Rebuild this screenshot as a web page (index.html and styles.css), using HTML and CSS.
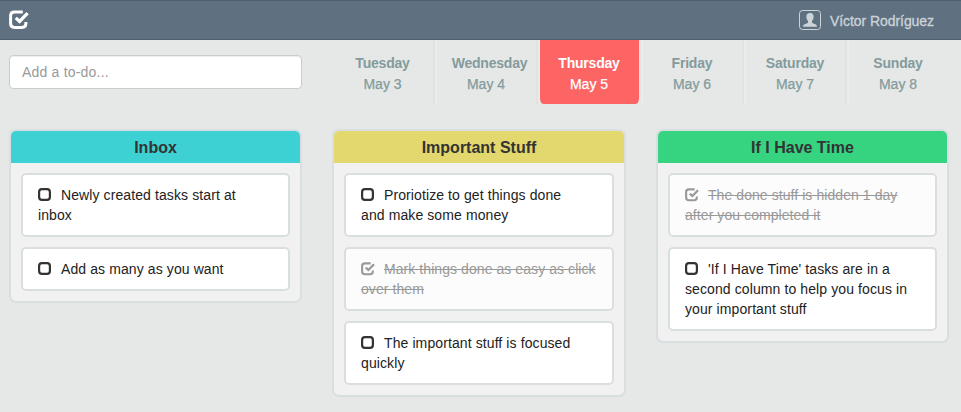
FILE: index.html
```
<!DOCTYPE html>
<html lang="en">
<head>
<meta charset="utf-8">
<title>To-do</title>
<link rel="stylesheet" href="styles.css">
</head>
<body>
<svg class="defs" aria-hidden="true">
  <symbol id="box" viewBox="0 0 13 13"><rect x="1.1" y="1.1" width="10.8" height="10.8" rx="2.8" fill="none" stroke="currentColor" stroke-width="2.2"/></symbol>
  <symbol id="check" viewBox="0 0 20 20"><path d="M13.8 2H5.5Q1.6 2 1.6 5.8V13.6Q1.6 17.5 5.5 17.5H13Q16.9 17.5 16.9 13.6V12" fill="none" stroke="currentColor" stroke-width="3"/><path d="M6.8 7.9L10.6 11.4L18.6 3.2" fill="none" stroke="currentColor" stroke-width="3.3"/></symbol>
</svg>
<header class="topbar">
  <svg class="logo"><use href="#check"/></svg>
  <div class="user">
    <svg class="avatar" viewBox="0 0 22 20"><rect x=".5" y=".5" width="21" height="19" rx="3" fill="none" stroke="currentColor"/><path d="M11 3C8.6 3 7.2 4.5 7.4 7C7.5 9 8.2 10.2 9 11V12.7C8 13.8 4 13.7 4 16.8H18C18 13.7 14 13.8 13 12.7V11C13.8 10.2 14.5 9 14.6 7C14.8 4.5 13.4 3 11 3Z" fill="currentColor"/></svg>
    <span>Víctor Rodríguez</span>
  </div>
</header>
<div class="tools">
  <input class="add" type="text" placeholder="Add a to-do...">
  <nav class="days">
    <div class="day"><b>Tuesday</b><span>May 3</span></div>
    <div class="day wide"><b>Wednesday</b><span>May 4</span></div>
    <div class="day today"><b>Thursday</b><span>May 5</span></div>
    <div class="day"><b>Friday</b><span>May 6</span></div>
    <div class="day"><b>Saturday</b><span>May 7</span></div>
    <div class="day"><b>Sunday</b><span>May 8</span></div>
  </nav>
</div>
<main class="board">
  <section class="list inbox">
    <h2>Inbox</h2>
    <div class="tasks">
      <div class="task"><svg><use href="#box"/></svg><span>Newly created tasks start at<br>inbox</span></div>
      <div class="task"><svg><use href="#box"/></svg><span>Add as many as you want</span></div>
    </div>
  </section>
  <section class="list important">
    <h2>Important Stuff</h2>
    <div class="tasks">
      <div class="task"><svg><use href="#box"/></svg><span>Proriotize to get things done<br>and make some money</span></div>
      <div class="task done"><svg><use href="#check"/></svg><span>Mark things done as easy as click<br>over them</span></div>
      <div class="task"><svg><use href="#box"/></svg><span>The important stuff is focused<br>quickly</span></div>
    </div>
  </section>
  <section class="list later">
    <h2>If I Have Time</h2>
    <div class="tasks">
      <div class="task done"><svg><use href="#check"/></svg><span>The done stuff is hidden 1 day<br>after you completed it</span></div>
      <div class="task"><svg><use href="#box"/></svg><span>'If I Have Time' tasks are in a<br>second column to help you focus in<br>your important stuff</span></div>
    </div>
  </section>
</main>
</body>
</html>
```

FILE: styles.css
```
* { box-sizing: border-box; }
body {
  margin: 0;
  height: 412px;
  overflow: hidden;
  background: #e6e8e7;
  font: 14px/20px "Liberation Sans", Arial, sans-serif;
  color: #222;
}
.defs { display: none; }
.topbar {
  height: 40px;
  display: flex;
  align-items: center;
  justify-content: space-between;
  padding: 0 27px 0 9px;
  background: #5f7081;
  border: solid #4a5f73;
  border-width: 1px 0;
}
.logo { width: 20px; height: 20px; color: #fff; }
.user {
  display: flex;
  align-items: center;
  gap: 9px;
  color: #ccd4d8;
  letter-spacing: -.06px;
  -webkit-text-stroke: .3px;
}
.user span { padding-top: 2px; }
.avatar { width: 22px; height: 20px; }
.tools { display: flex; height: 89px; align-items: flex-start; }
.add {
  width: 293px;
  height: 34px;
  margin: 15px 29px 0 9px;
  padding: 6px 12px;
  border: 1px solid #ccc;
  border-radius: 4px;
  background: #fff;
  box-shadow: inset 0 1px 1px rgba(0, 0, 0, .075);
  font: inherit;
  letter-spacing: .2px;
}
.add::placeholder { color: #999; opacity: 1; }
.days { display: flex; }
.day {
  width: 103px;
  height: 64px;
  padding: 13px 1px 0 0;
  display: flex;
  flex-direction: column;
  align-items: center;
  line-height: 21px;
  color: #839b9c;
  border-left: 2px solid #eaeceb;
  border-right: 2px solid #e1e3e2;
  -webkit-text-stroke: .25px;
}
.day b { letter-spacing: -.2px; -webkit-text-stroke: 0; }
.day:first-child { width: 104px; border-left-color: transparent; }
.day:last-child { border-right-color: transparent; }
.wide b { padding-left: 7px; }
.today {
  color: #fff;
  background: #fc6564 padding-box;
  border-radius: 0 0 5px 5px;
}
.board {
  display: grid;
  grid-template-columns: 293px 294px 293px;
  column-gap: 30px;
  align-items: start;
  padding-left: 9px;
}
.list {
  border: 2px solid #d9dfe1;
  border-radius: 7px;
  background: #f1f1f1;
  overflow: hidden;
}
.list h2 {
  margin: 0;
  height: 32px;
  font-size: 16px;
  line-height: 33px;
  text-align: center;
  color: #333;
}
.inbox h2 { background: #3dd1d3; }
.important h2 { background: #e2d86e; }
.later h2 { background: #36d381; }
.tasks {
  display: flex;
  flex-direction: column;
  gap: 10px;
  padding: 10px;
}
.task {
  padding: 10px 15px;
  border: 2px solid #d9dfe1;
  border-radius: 5px;
  background: #fff;
  white-space: nowrap;
  letter-spacing: .1px;
}
.task svg {
  width: 13px;
  height: 13px;
  margin-right: 10px;
  vertical-align: -1px;
  color: #333;
}
.done { background: #fcfcfc; color: #999; letter-spacing: .07px; }
.done svg { width: 14px; height: 14px; margin-right: 9px; vertical-align: -2px; color: #999; }
.done span { text-decoration: line-through; }
```
